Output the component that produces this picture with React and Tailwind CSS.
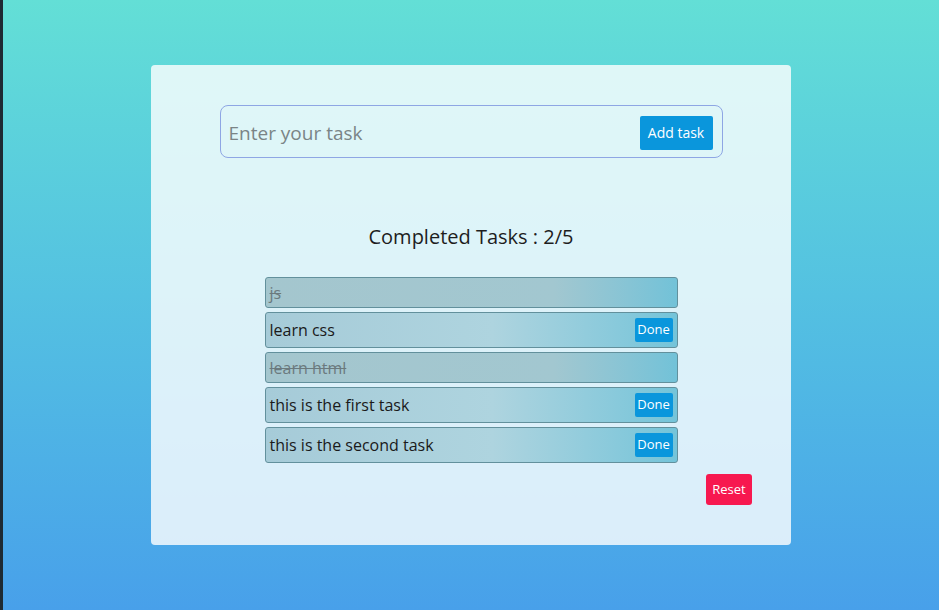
import { useState } from "react";

const initialTasks = [
  { id: 1, text: "js", done: true },
  { id: 2, text: "learn css", done: false },
  { id: 3, text: "learn html", done: true },
  { id: 4, text: "this is the first task", done: false },
  { id: 5, text: "this is the second task", done: false },
];

export default function App() {
  const [tasks, setTasks] = useState(initialTasks);
  const [input, setInput] = useState("");

  const addTask = () => {
    if (!input.trim()) return;
    setTasks([...tasks, { id: Date.now(), text: input, done: false }]);
    setInput("");
  };

  const markDone = (id) => {
    setTasks(tasks.map((t) => (t.id === id ? { ...t, done: true } : t)));
  };

  const completed = tasks.filter((t) => t.done).length;

  return (
    <div className="flex min-h-screen font-['Open_Sans',sans-serif]">
      {/* strip of the window behind */}
      <div className="w-[3px] bg-[#1e2a33]" />

      <div className="flex-1 bg-gradient-to-b from-[#63dfd6] to-[#48a0ea] pt-[65px]">
        <div className="mx-auto flex h-[480px] w-[640px] flex-col rounded-[4px] bg-white/80 px-[40px] pt-[40px]">
          {/* INPUT */}
          <div className="mx-auto flex h-[53px] w-[503px] items-center rounded-[8px] border border-[#8ea6e4] pl-[8px] pr-[9px]">
            <input
              value={input}
              onChange={(e) => setInput(e.target.value)}
              placeholder="Enter your task"
              className="mt-[3px] flex-1 bg-transparent text-[19px] text-[#333] outline-none placeholder:text-[#7a8486]"
            />
            <button
              onClick={addTask}
              className="mt-[2px] h-[34px] w-[73px] rounded-[2px] bg-[#0a96dc] text-[14px] text-white"
            >
              Add task
            </button>
          </div>

          <h2 className="mt-[65px] text-center text-[20px] leading-[28px] text-[#1e1e1e]">
            Completed Tasks : {completed}/{tasks.length}
          </h2>

          {/* LIST */}
          <div className="mx-auto mt-[26px] flex w-[413px] flex-col gap-[4px]">
            {tasks.map((t) =>
              t.done ? (
                <div
                  key={t.id}
                  className="flex h-[31px] items-center rounded-[3px] border border-[#62909c] bg-gradient-to-r from-[#a4c6ce] via-[#a2c7d0] via-70% to-[#72c2d8] pl-[4px] text-[16px] text-[#6b7a7e] line-through"
                >
                  {t.text}
                </div>
              ) : (
                <div
                  key={t.id}
                  className="flex h-[36px] items-center justify-between rounded-[3px] border border-[#62909c] bg-gradient-to-r from-[#a6cbd8] via-[#aed4df] via-55% to-[#74c4d9] pl-[4px] pr-[4px] text-[16px] text-[#1a1a1a]"
                >
                  <span>{t.text}</span>
                  <button
                    onClick={() => markDone(t.id)}
                    className="h-[24px] w-[38px] rounded-[2px] bg-[#0a96dc] text-[13px] text-white"
                  >
                    Done
                  </button>
                </div>
              )
            )}
          </div>

          <div className="mt-[11px] flex justify-end">
            <button
              onClick={() => setTasks(tasks.map((t) => ({ ...t, done: false })))}
              className="-mr-[1px] h-[31px] w-[46px] rounded-[3px] bg-[#f7184f] text-[13px] text-white"
            >
              Reset
            </button>
          </div>
        </div>
      </div>
    </div>
  );
}
